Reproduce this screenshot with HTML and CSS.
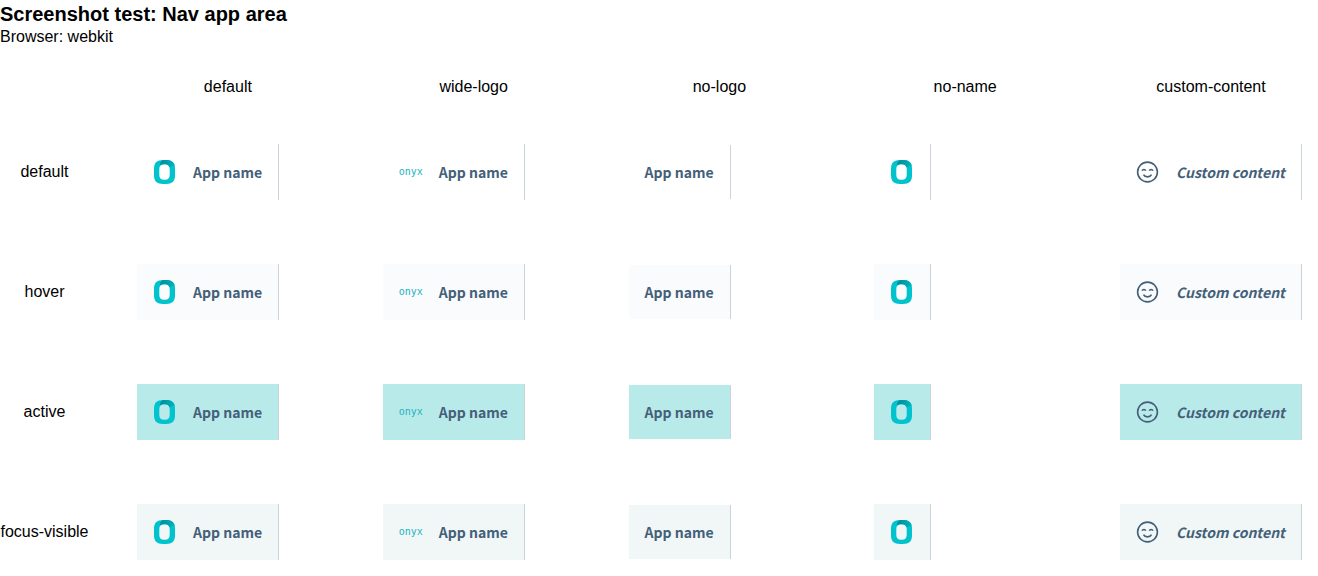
FILE: index.html
```html
<!DOCTYPE html>
<html lang="en">
<head>
<meta charset="utf-8">
<title>Nav app area</title>
<link rel="stylesheet" href="styles.css">
</head>
<body>
<svg class="sprite" aria-hidden="true">
  <linearGradient id="shade" x1="0" x2="1" y1="0" y2="0">
    <stop offset="0" stop-color="#008a98"/>
    <stop offset="1" stop-color="#00b4bf"/>
  </linearGradient>
  <symbol id="logo" viewBox="0 0 24 24">
    <path fill="#00c3cd" fill-rule="evenodd" d="M10 0h3c6 0 9 2.800 9 8.500v7c0 5.700-3 8.500-9 8.500h-3c-6 0-9-2.800-9-8.500v-7C1 2.800 4 0 10 0zm1 4.300C7.800 4.300 6.300 6 6.300 9v6c0 3 1.500 4.700 4.700 4.700h1c3.200 0 4.700-1.700 4.700-4.700V9c0-3-1.500-4.700-4.700-4.700z"/>
    <path fill="url(#shade)" d="M10 0h3c4.900 0 7.900 1.900 8.700 5.600L16.400 7.200c-.6-1.900-1.900-2.900-4.400-2.900h-1c-1.700 0-2.800.5-3.500 1.400C6.800 3.400 7.500 1.300 10 0z"/>
  </symbol>
  <symbol id="smile" viewBox="0 0 24 24">
    <g fill="none" stroke="currentColor" stroke-width="1.600">
      <circle cx="11.500" cy="12" r="9.900"/>
      <path d="M6.100 10.700c.6-1.700 3-1.700 3.600 0M13.300 10.700c.6-1.700 3-1.700 3.600 0M7.500 14.600c1.500 3 6.500 3 8 0"/>
    </g>
  </symbol>
</svg>
<header class="header">
  <h1 class="title">Screenshot test: Nav app area</h1>
  <p class="browser">Browser: webkit</p>
</header>
<main class="grid">
  <span></span><span class="label">default</span><span class="label">wide-logo</span><span class="label">no-logo</span><span class="label">no-name</span><span class="label">custom-content</span>

  <span class="label">default</span>
  <div class="cell"><button class="app"><svg class="icon"><use href="#logo"/></svg>App name</button></div>
  <div class="cell"><button class="app"><span class="icon wordmark">onyx</span>App name</button></div>
  <div class="cell"><button class="app">App name</button></div>
  <div class="cell"><button class="app" aria-label="Home"><svg class="icon"><use href="#logo"/></svg></button></div>
  <div class="cell"><button class="app"><svg class="icon"><use href="#smile"/></svg><em>Custom content</em></button></div>

  <span class="label">hover</span>
  <div class="cell"><button class="app app-hover"><svg class="icon"><use href="#logo"/></svg>App name</button></div>
  <div class="cell"><button class="app app-hover"><span class="icon wordmark">onyx</span>App name</button></div>
  <div class="cell"><button class="app app-hover">App name</button></div>
  <div class="cell"><button class="app app-hover" aria-label="Home"><svg class="icon"><use href="#logo"/></svg></button></div>
  <div class="cell"><button class="app app-hover"><svg class="icon"><use href="#smile"/></svg><em>Custom content</em></button></div>

  <span class="label">active</span>
  <div class="cell"><button class="app app-active"><svg class="icon"><use href="#logo"/></svg>App name</button></div>
  <div class="cell"><button class="app app-active"><span class="icon wordmark">onyx</span>App name</button></div>
  <div class="cell"><button class="app app-active">App name</button></div>
  <div class="cell"><button class="app app-active" aria-label="Home"><svg class="icon"><use href="#logo"/></svg></button></div>
  <div class="cell"><button class="app app-active"><svg class="icon"><use href="#smile"/></svg><em>Custom content</em></button></div>

  <span class="label">focus-visible</span>
  <div class="cell"><button class="app app-focus"><svg class="icon"><use href="#logo"/></svg>App name</button></div>
  <div class="cell"><button class="app app-focus"><span class="icon wordmark">onyx</span>App name</button></div>
  <div class="cell"><button class="app app-focus">App name</button></div>
  <div class="cell"><button class="app app-focus" aria-label="Home"><svg class="icon"><use href="#logo"/></svg></button></div>
  <div class="cell"><button class="app app-focus"><svg class="icon"><use href="#smile"/></svg><em>Custom content</em></button></div>
</main>
</body>
</html>
```
FILE: styles.css
```css
* {
  box-sizing: border-box;
}

body {
  margin: 0;
  background: #fff;
  color: #000;
  font: 16px/18px "Liberation Sans", Arial, sans-serif;
}

.sprite {
  position: absolute;
  width: 0;
  height: 0;
}

.header {
  padding-bottom: 32px;
}

.title {
  margin: 0;
  font-size: 20px;
  line-height: 28px;
}

.browser {
  margin: 0;
}

.grid {
  display: grid;
  grid-template-columns: minmax(89px, auto) repeat(5, 1fr);
  gap: 32px;
  align-items: center;
}

.label {
  text-align: center;
}

.cell {
  display: flex;
  align-items: center;
  height: 88px;
  padding: 16px;
}

.app {
  display: flex;
  align-items: center;
  gap: 16px;
  padding: 16px;
  border: 0;
  border-right: 1px solid #cbd3da;
  background: #fff;
  color: #446079;
  font: 600 14px/22px "Noto Sans CJK SC", sans-serif;
  white-space: nowrap;
}

.app-hover {
  background: #fafbfd;
}

.app-active {
  background: #b9eaea;
}

.app-focus {
  background: #f1f7f7;
}

.icon {
  flex: none;
  width: 24px;
  height: 24px;
}

.wordmark {
  color: #21b3c0;
  font: 10px/24px "DejaVu Sans Mono", monospace;
}
```
